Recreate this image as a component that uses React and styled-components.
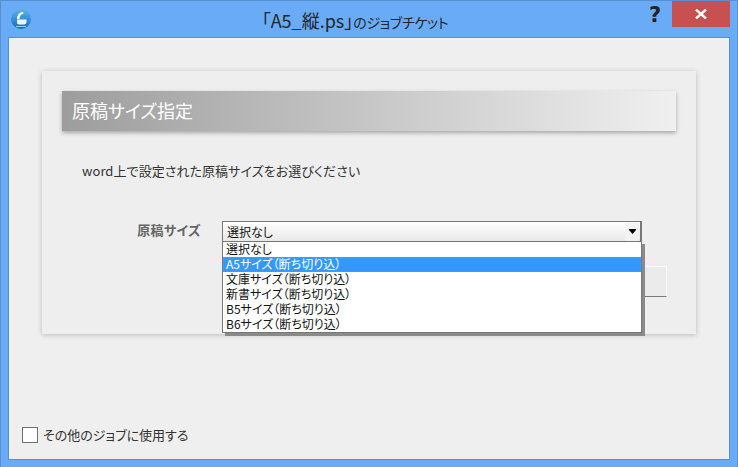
import React from 'react'
import styled, { createGlobalStyle } from 'styled-components'

const Global = createGlobalStyle`
  html, body {
    margin: 0;
    padding: 0;
    background: #6aabf7;
  }
  * {
    box-sizing: border-box;
  }
`

const fontStack = `"Noto Sans CJK JP", "Liberation Sans", sans-serif`

const Window = styled.div`
  width: 738px;
  height: 467px;
  background: #6aabf7;
  border: 1px solid #5a8fcf;
  border-bottom: none;
  display: flex;
  flex-direction: column;
  font-family: ${fontStack};
  font-feature-settings: "palt";
  overflow: hidden;
`

const TitleBar = styled.div`
  height: 36px;
  flex: none;
  display: flex;
  align-items: flex-start;
  position: relative;
`

const AppIcon = styled.svg`
  width: 20px;
  height: 20px;
  margin: 8px 0 0 10px;
  flex: none;
`

const Title = styled.div`
  position: absolute;
  left: 0;
  right: 28px;
  top: 7px;
  text-align: center;
  font-size: 18px;
  line-height: 24px;
  color: #22262c;
`

const TitleKana = styled.span`
  font-size: 14px;
  letter-spacing: -0.3px;
`

const Controls = styled.div`
  margin-left: auto;
  margin-right: 7px;
  display: flex;
  align-items: flex-start;
`

const Help = styled.div`
  width: 30px;
  margin-right: 2px;
  padding-top: 2px;
  text-align: center;
  font-family: "DejaVu Sans", sans-serif;
  font-weight: 700;
  font-size: 21px;
  line-height: 24px;
  color: #222;
`

const Close = styled.div`
  width: 58px;
  height: 26px;
  background: #c75050;
  display: flex;
  align-items: center;
  justify-content: center;
`

const Client = styled.div`
  flex: 1;
  margin: 0 7px 7px 7px;
  background: #efefef;
  border: 1px solid #5a8fcf;
  padding: 33px 33px 0 33px;
  display: flex;
  flex-direction: column;
`

const Card = styled.div`
  height: 263px;
  background: #eeeeee;
  box-shadow: 0 1px 5px rgba(0, 0, 0, 0.22);
  padding: 20px;
  display: flex;
  flex-direction: column;
`

const Heading = styled.div`
  height: 40px;
  flex: none;
  padding: 0 0 2px 10px;
  display: flex;
  align-items: center;
  background: linear-gradient(to right, #9d9d9d, #f0f0f0);
  box-shadow: 0 2px 4px rgba(0, 0, 0, 0.3);
  color: #fff;
  font-size: 18px;
`

const Lead = styled.div`
  margin: 30px 0 0 20px;
  font-size: 13px;
  letter-spacing: 0.07px;
  line-height: 20px;
  color: #333;
`

const FormRow = styled.div`
  margin-top: 40px;
  display: flex;
  align-items: flex-start;
`

const FieldLabel = styled.div`
  width: 160px;
  padding: 0 21px 0 0;
  text-align: right;
  font-size: 13px;
  letter-spacing: 0.3px;
  font-weight: 700;
  line-height: 18px;
  color: #666;
`

const SelectWrap = styled.div`
  position: relative;
  width: 420px;
`

const SelectBox = styled.div`
  height: 21px;
  border: 1px solid #777;
  border-right-width: 2px;
  background: linear-gradient(to bottom, #fff, #e8e8e8);
  padding: 0 1px 0 4px;
  display: flex;
  align-items: center;
  justify-content: space-between;
  font-size: 12px;
  color: #111;
`

const Caret = styled.div`
  width: 14px;
  height: 18px;
  background: #f3f3f3;
  display: flex;
  align-items: center;
  justify-content: center;
`

const Dropdown = styled.div`
  position: absolute;
  left: 0;
  top: 20px;
  width: 420px;
  background: #fff;
  border: 1px solid #777;
  box-shadow: 3px 3px 0 #8a8a8a;
  z-index: 2;
`

const Option = styled.div`
  height: 15px;
  padding-left: 3px;
  font-size: 12px;
  line-height: 14px;
  color: ${p => (p.$active ? '#fff' : '#111')};
  background: ${p => (p.$active ? '#3399ff' : 'transparent')};
  outline: ${p => (p.$active ? '1px dotted #c9822f' : 'none')};
  outline-offset: -1px;
  white-space: nowrap;
`

const HiddenButton = styled.div`
  width: 445px;
  height: 31px;
  margin: 24px 0 0 160px;
  background: #ebebeb;
  border: 1px solid #fafafa;
  border-bottom: 1px solid #777;
`

const Footer = styled.label`
  margin-top: auto;
  margin-left: -20px;
  margin-bottom: 15px;
  display: flex;
  align-items: center;
  gap: 5px;
  font-size: 13px;
  line-height: 18px;
  color: #333;
`

const CheckBox = styled.span`
  width: 16px;
  height: 16px;
  background: #fff;
  border: 1px solid #707070;
`

const options = [
  '選択なし',
  'A5サイズ（断ち切り込）',
  '文庫サイズ（断ち切り込）',
  '新書サイズ（断ち切り込）',
  'B5サイズ（断ち切り込）',
  'B6サイズ（断ち切り込）',
]

export default function App() {
  return (
    <>
      <Global />
      <Window>
        <TitleBar>
          <AppIcon viewBox="0 0 20 20">
            <defs>
              <linearGradient id="orb" x1="0" y1="0" x2="0" y2="1">
                <stop offset="0" stopColor="#5fb4e8" />
                <stop offset="1" stopColor="#0c6fc4" />
              </linearGradient>
            </defs>
            <circle cx="10" cy="10" r="10" fill="url(#orb)" />
            <path d="M6 10 C6 6 8 3.5 12 3 L12.5 4.5 C10 5 8.5 7 8.5 10 Z" fill="#fff" />
            <path d="M6 10.5 H15.5 V13.5 C15 15 14 15.5 12 15.5 H8 C6.5 15.5 6 14.5 6 13.5 Z" fill="#eaf5fb" />
            <path d="M5 17.5 H15" stroke="#9ccbe8" strokeWidth="1" />
          </AppIcon>
          <Title>「A5_縦.ps」<TitleKana>のジョブチケット</TitleKana></Title>
          <Controls>
            <Help>?</Help>
            <Close>
              <svg width="12" height="10" viewBox="0 0 12 10">
                <path d="M1 0.5 L11 9.5 M11 0.5 L1 9.5" stroke="#fff" strokeWidth="2.4" />
              </svg>
            </Close>
          </Controls>
        </TitleBar>
        <Client>
          <Card>
            <Heading>原稿サイズ指定</Heading>
            <Lead>word上で設定された原稿サイズをお選びください</Lead>
            <FormRow>
              <FieldLabel>原稿サイズ</FieldLabel>
              <SelectWrap>
                <SelectBox>
                  選択なし
                  <Caret>
                    <svg width="7" height="5" viewBox="0 0 7 5">
                      <path d="M0 0 H7 V1 L3.5 5 L0 1 Z" fill="#000" />
                    </svg>
                  </Caret>
                </SelectBox>
                <Dropdown>
                  {options.map((o, i) => (
                    <Option key={o} $active={i === 1}>{o}</Option>
                  ))}
                </Dropdown>
              </SelectWrap>
            </FormRow>
            <HiddenButton />
          </Card>
          <Footer>
            <CheckBox />
            その他のジョブに使用する
          </Footer>
        </Client>
      </Window>
    </>
  )
}
